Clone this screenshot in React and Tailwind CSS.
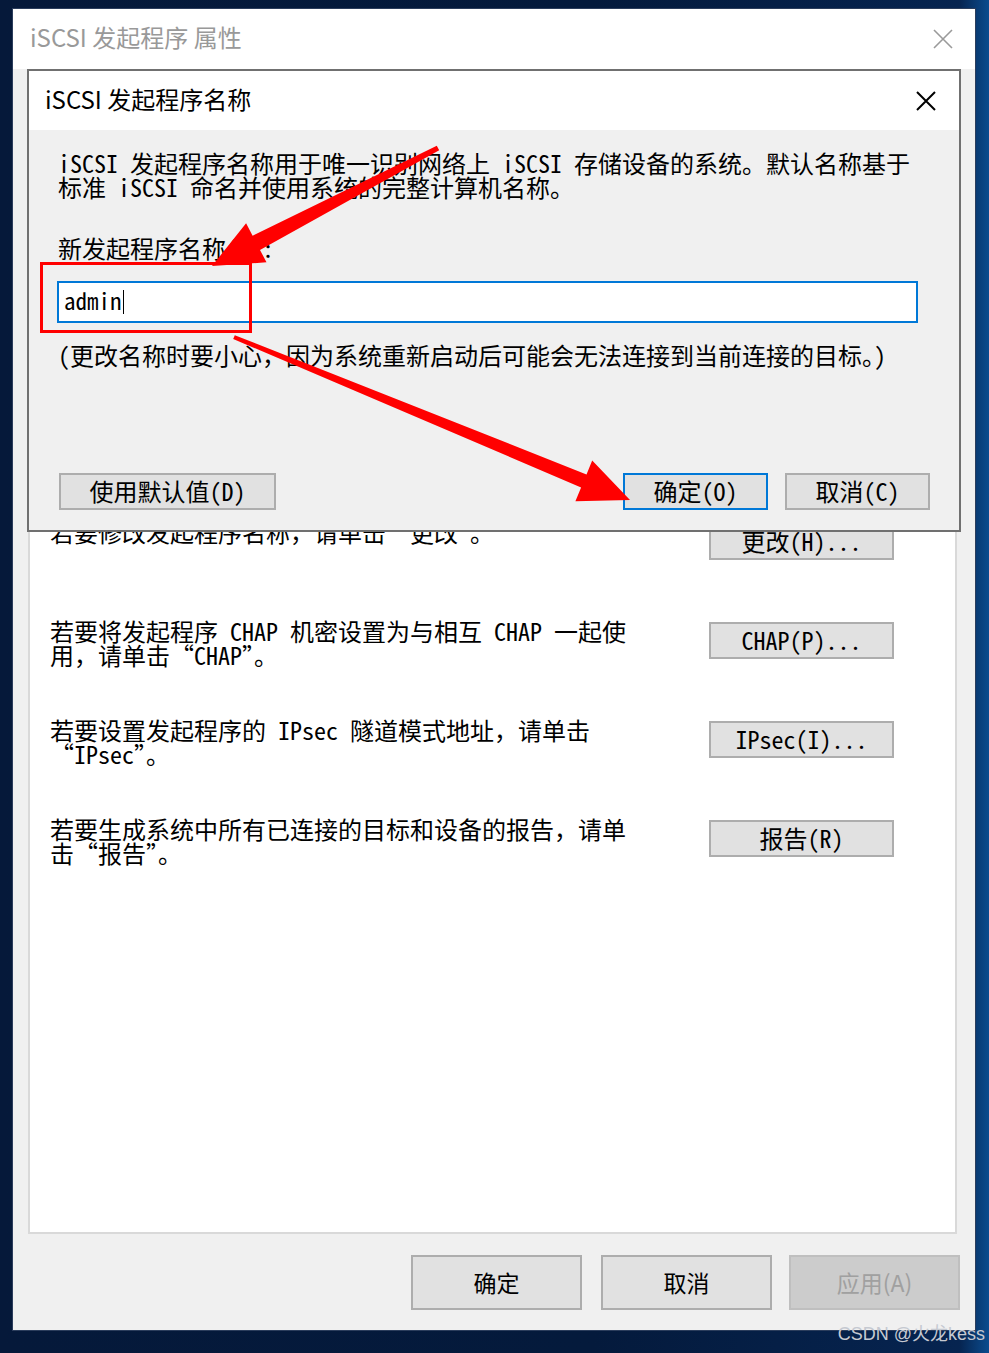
import React from "react";

const SONG = "font-['Noto_Sans_Mono_CJK_SC','Noto_Sans_CJK_SC',monospace]";
const YAHEI = "font-['Noto_Sans_CJK_SC',sans-serif]";

function XIcon({ color, size, width }) {
  return (
    <svg width={size} height={size} viewBox="0 0 20 20" className="block">
      <path d="M1 1 L19 19 M19 1 L1 19" stroke={color} strokeWidth={width} fill="none" />
    </svg>
  );
}

function WinButton({ children, className = "" }) {
  return (
    <div
      className={`h-[37px] border-2 border-[#adadad] bg-[#e1e1e1] flex items-center justify-center text-[24px] leading-[24px] text-black ${SONG} ${className}`}
    >
      <span className="-mt-[2px]">{children}</span>
    </div>
  );
}

function Row({ lines, button }) {
  return (
    <div className="h-[99px] flex justify-between items-start">
      <div className={`text-[24px] leading-[24px] text-black ${SONG} -mt-[3px]`}>
        {lines.map((l, i) => (
          <div key={i} className="whitespace-pre">{l}</div>
        ))}
      </div>
      <WinButton className="w-[185px]">{button}</WinButton>
    </div>
  );
}

function Annotations() {
  return (
    <svg
      width="989"
      height="1353"
      viewBox="0 0 989 1353"
      className="absolute inset-0 pointer-events-none"
    >
      <rect x="41.5" y="263.5" width="209" height="68" fill="none" stroke="#ff0000" strokeWidth="3" />
      <polygon
        fill="#ff0000"
        points="439.2,150.2 260.0,249.9 266.5,262.3 212,266 246.1,223.3 252.6,235.7 436.8,145.8"
      />
      <polygon
        fill="#ff0000"
        points="233.2,338.9 581.1,487.4 575.4,501.2 630,500 592.2,460.6 586.5,474.4 234.8,335.2"
      />
    </svg>
  );
}

export default function App() {
  return (
    <div
      lang="zh-CN"
      className="relative w-[989px] h-[1353px] overflow-hidden bg-[linear-gradient(90deg,#05193a_0%,#041a3c_60%,#062450_97%,#0b4c8e_100%)]"
    >
      <div className="pl-[12px] pt-[8px]">
        <div className="relative w-[964px] h-[1323px] border border-[#2b3d5c] bg-[#f0f0f0] flex flex-col">
          {/* window title bar */}
          <div className="h-[60px] shrink-0 bg-white flex items-center justify-between pl-[17px] pr-[22px]">
            <span className={`-mt-[4px] text-[24px] leading-[30px] text-[#999999] ${YAHEI}`}>iSCSI 发起程序 属性</span>
            <XIcon color="#9a9a9a" size={20} width={1.6} />
          </div>

          {/* window body */}
          <div className="flex-1 flex flex-col pl-[15px] pr-[15px] pt-[40px] pb-[20px]">
            <div className="flex-1 mr-[3px] border-2 border-[#d9d9d9] bg-white pt-[412px] pl-[20px] pr-[61px]">
              <Row lines={["若要修改发起程序名称，请单击“更改”。"]} button="更改(H)..." />
              <Row
                lines={["若要将发起程序 CHAP 机密设置为与相互 CHAP 一起使", "用，请单击“CHAP”。"]}
                button="CHAP(P)..."
              />
              <Row
                lines={["若要设置发起程序的 IPsec 隧道模式地址，请单击", "“IPsec”。"]}
                button="IPsec(I)..."
              />
              <Row
                lines={["若要生成系统中所有已连接的目标和设备的报告，请单", "击“报告”。"]}
                button="报告(R)"
              />
            </div>
            <div className="mt-[21px] h-[55px] flex justify-end">
              <div className={`w-[171px] h-[55px] border-2 border-[#adadad] bg-[#e1e1e1] flex items-center justify-center text-[23px] text-black ${YAHEI}`}>
                确定
              </div>
              <div className={`ml-[19px] w-[171px] h-[55px] border-2 border-[#adadad] bg-[#e1e1e1] flex items-center justify-center text-[23px] text-black ${YAHEI}`}>
                取消
              </div>
              <div className={`ml-[17px] w-[171px] h-[55px] border-2 border-[#bfbfbf] bg-[#cccccc] flex items-center justify-center text-[23px] text-[#a0a0a0] ${YAHEI}`}>
                应用(A)
              </div>
            </div>
          </div>

          {/* modal dialog */}
          <div className="absolute left-[14px] top-[60px] w-[934px] h-[463px] border-2 border-[#707070] bg-[#f0f0f0] flex flex-col">
            <div className="h-[59px] shrink-0 bg-white flex items-center justify-between pl-[16px] pr-[23px]">
              <span className={`-mt-[3px] text-[24px] leading-[30px] text-black ${YAHEI}`}>iSCSI 发起程序名称</span>
              <XIcon color="#000000" size={20} width={2} />
            </div>
            <div className={`flex-1 flex flex-col pl-[29px] pr-[29px] pt-[21px] pb-[20px] text-[24px] leading-[24px] text-black ${SONG}`}>
              <div>
                <div className="whitespace-pre">iSCSI 发起程序名称用于唯一识别网络上 iSCSI 存储设备的系统。默认名称基于</div>
                <div className="whitespace-pre">标准 iSCSI 命名并使用系统的完整计算机名称。</div>
              </div>
              <div className="mt-[37px]">新发起程序名称(N):</div>
              <div className="mt-[21px] -ml-[1px] w-[861px] h-[42px] border-2 border-[#0078d7] bg-white flex items-center pl-[5px]">
                <span className="-mt-[4px] text-[23px] leading-[24px]">admin</span>
                <span className="ml-[1px] w-[1px] h-[24px] bg-black" />
              </div>
              <div className="mt-[20px] whitespace-pre">(更改名称时要小心，因为系统重新启动后可能会无法连接到当前连接的目标。)</div>
              <div className="mt-auto flex items-center">
                <WinButton className="ml-[1px] w-[217px]">使用默认值(D)</WinButton>
                <div className="flex-1" />
                <div className={`w-[145px] h-[37px] border-2 border-[#0078d7] bg-[#e1e1e1] flex items-center justify-center text-[24px] leading-[24px] ${SONG}`}>
                  <span className="-mt-[2px]">确定(O)</span>
                </div>
                <WinButton className="ml-[17px] w-[145px]">取消(C)</WinButton>
              </div>
            </div>
          </div>
        </div>
      </div>

      <Annotations />

      <div className="absolute right-[4px] bottom-[9px] text-[18px] leading-[20px] text-[#c5c9d1] font-['Liberation_Sans','Noto_Sans_CJK_SC',sans-serif]">
        CSDN @火龙kess
      </div>
    </div>
  );
}
